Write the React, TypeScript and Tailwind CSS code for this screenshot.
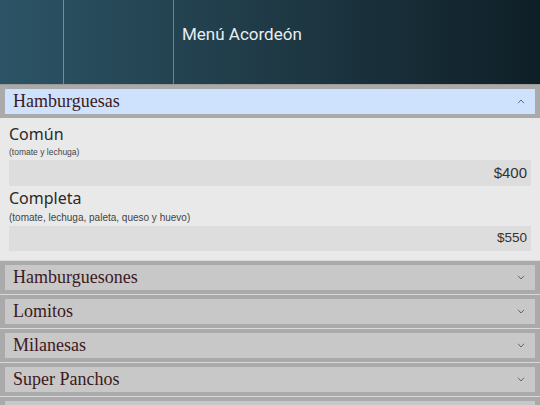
import React from "react";

const items = ["Hamburguesones", "Lomitos", "Milanesas", "Super Panchos", ""];

function Chevron({ up, color }: { up?: boolean; color: string }) {
  return (
    <svg width="8" height="5" viewBox="0 0 8 5" className="shrink-0">
      <path
        d={up ? "M1 4.2 L4 1 L7 4.2" : "M1 0.8 L4 4 L7 0.8"}
        fill="none"
        stroke={color}
        strokeWidth="1"
      />
    </svg>
  );
}

export default function App() {
  return (
    <div className="w-[540px] h-[405px] overflow-hidden bg-[#e8e8e8]">
      <header className="h-[84px] flex bg-gradient-to-r from-[#2c5466] via-[#1f3a46] to-[#0f1f27]">
        <div className="w-[64px] border-r border-[rgba(255,255,255,0.35)]" />
        <div className="w-[110px] border-r border-[rgba(255,255,255,0.35)]" />
        <div
          className="pl-[8px] pt-[23px] text-[17px] leading-[22px] text-[#e8eef2]"
          style={{ fontFamily: "Roboto, 'Liberation Sans', sans-serif" }}
        >
          Menú Acordeón
        </div>
      </header>

      <div className="border-t border-[#9a9a9a] bg-[#aaaaaa] px-[5px] py-[4px]">
        <div className="h-[25px] bg-[#cfe2fd] flex items-center justify-between pl-[8px] pr-[10px]">
          <span
            className="text-[18px] leading-[23px] text-[#3d1820]"
            style={{ fontFamily: "'Liberation Serif', serif" }}
          >
            Hamburguesas
          </span>
          <Chevron up color="#5b6b94" />
        </div>
      </div>

      <div className="bg-[#e9e9e9] px-[9px] pt-[6px] pb-[9px]">
        <div
          className="h-[20px] text-[16px] leading-[20px] text-[#2a2a2a]"
          style={{ fontFamily: "'Noto Sans', sans-serif" }}
        >
          Común
        </div>
        <div
          className="h-[16px] flex items-center text-[8.5px] text-[#444]"
          style={{ fontFamily: "'Liberation Sans', sans-serif" }}
        >
          (tomate y lechuga)
        </div>
        <div
          className="h-[26px] bg-[#dddddd] flex items-center justify-end pr-[4px] text-[15px] text-[#333]"
          style={{ fontFamily: "'Liberation Sans', sans-serif" }}
        >
          $400
        </div>
        <div
          className="mt-[2px] h-[20px] text-[16px] leading-[20px] text-[#2a2a2a]"
          style={{ fontFamily: "'Noto Sans', sans-serif" }}
        >
          Completa
        </div>
        <div
          className="h-[18px] flex items-center text-[10px] text-[#444]"
          style={{ fontFamily: "'Liberation Sans', sans-serif" }}
        >
          (tomate, lechuga, paleta, queso y huevo)
        </div>
        <div
          className="h-[25px] bg-[#dddddd] flex items-center justify-end pr-[4px] text-[13.5px] text-[#333]"
          style={{ fontFamily: "'Liberation Sans', sans-serif" }}
        >
          $550
        </div>
      </div>

      {items.map((name, i) => (
        <div key={i} className="border-t border-[#d9d9d9] bg-[#aaaaaa] px-[5px] py-[4px]">
          <div className="h-[25px] bg-[#c8c8c8] flex items-center justify-between pl-[8px] pr-[10px]">
            <span
              className="text-[18px] leading-[23px] text-[#3d1820]"
              style={{ fontFamily: "'Liberation Serif', serif" }}
            >
              {name}
            </span>
            <Chevron color="#666666" />
          </div>
        </div>
      ))}
    </div>
  );
}
